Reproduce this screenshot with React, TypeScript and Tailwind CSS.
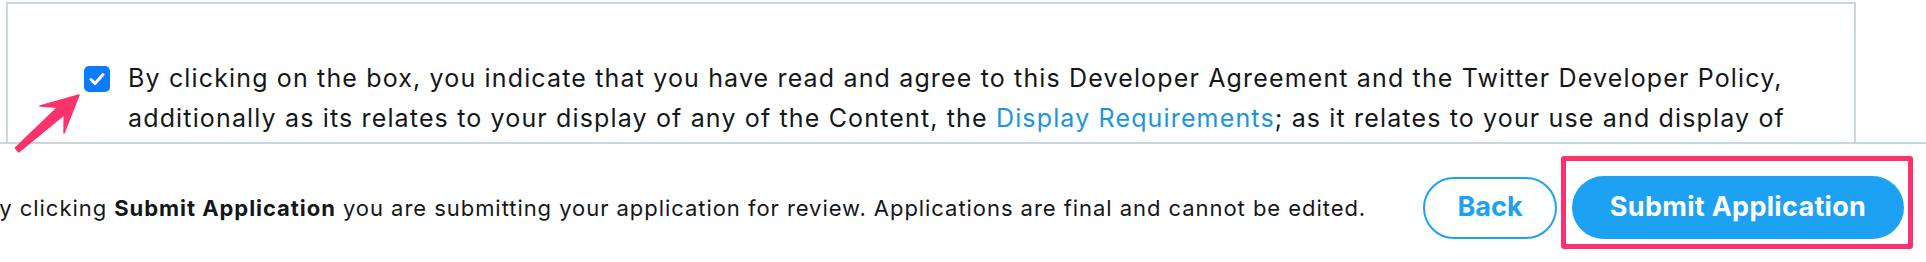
export default function App() {
    return (
        <div className="relative h-[262px] w-[1926px] overflow-hidden bg-white font-['Inter',sans-serif] text-[#14171a]">
            {/* agreement box, clipped by the footer */}
            <div className="h-[142px] overflow-hidden pt-[2px]">
                <div className="ml-[6px] h-full w-[1850px] border-x-2 border-t-2 border-[#ccd6dd] pl-[76px] pr-[52px] pt-[54px]">
                    <label className="flex items-start gap-[18px]">
                        <span className="mt-[8px] flex h-[26px] w-[26px] shrink-0 items-center justify-center rounded-[5px] bg-[#0a7cff]">
                            <svg width="16" height="14" viewBox="0 0 16 14" fill="none">
                                <path d="M2 7.5 L6 11.5 L14 2.5" stroke="white" strokeWidth="3" strokeLinecap="round" strokeLinejoin="round" />
                            </svg>
                        </span>
                        <p className="text-[25px] leading-[40px] tracking-[1.15px]">
                            By clicking on the box, you indicate that you have read and agree to this Developer Agreement and the Twitter Developer Policy, additionally as its relates to your display of any of the Content, the{" "}
                            <a className="text-[#1b95e0]">Display Requirements</a>; as it relates to your use and display of the Twitter Marks, the Twitter Brand Guidelines; and as it relates to your use of the Licensed Material.
                        </p>
                    </label>
                </div>
            </div>

            {/* footer */}
            <div className="flex h-[120px] items-center border-t-2 border-[#ccd6dd] pr-[22px] pt-[9px]">
                <p className="-ml-[16px] whitespace-nowrap text-[22px] leading-[30px] tracking-[0.95px]">
                    By clicking <span className="font-bold">Submit Application</span> you are submitting your application for review. Applications are final and cannot be edited.
                </p>
                <div className="ml-auto flex items-center gap-[15px]">
                    <button className="h-[62px] w-[134px] rounded-full border-2 border-[#1da1f2] text-[27px] font-bold text-[#1da1f2]">
                        Back
                    </button>
                    <div className="relative">
                        <button className="h-[63px] w-[332px] rounded-full bg-[#1da1f2] text-[27px] font-bold tracking-[0.3px] text-white">
                            Submit Application
                        </button>
                        <span className="pointer-events-none absolute -bottom-[10px] -left-[11px] -right-[9px] -top-[20px] rounded-[3px] border-[5px] border-[#fc326c]" />
                    </div>
                </div>
            </div>

            {/* annotation arrow */}
            <svg className="pointer-events-none absolute left-0 top-0" width="100" height="160" viewBox="0 0 100 160">
                <polygon
                    points="79,95 64,133 64.3,114.6 18.7,151.9 15.3,148.1 57.7,107.2 40,106"
                    fill="#fc326c"
                    stroke="#fc326c"
                    strokeWidth="1.5"
                    strokeLinejoin="round"
                />
            </svg>
        </div>
    );
}
